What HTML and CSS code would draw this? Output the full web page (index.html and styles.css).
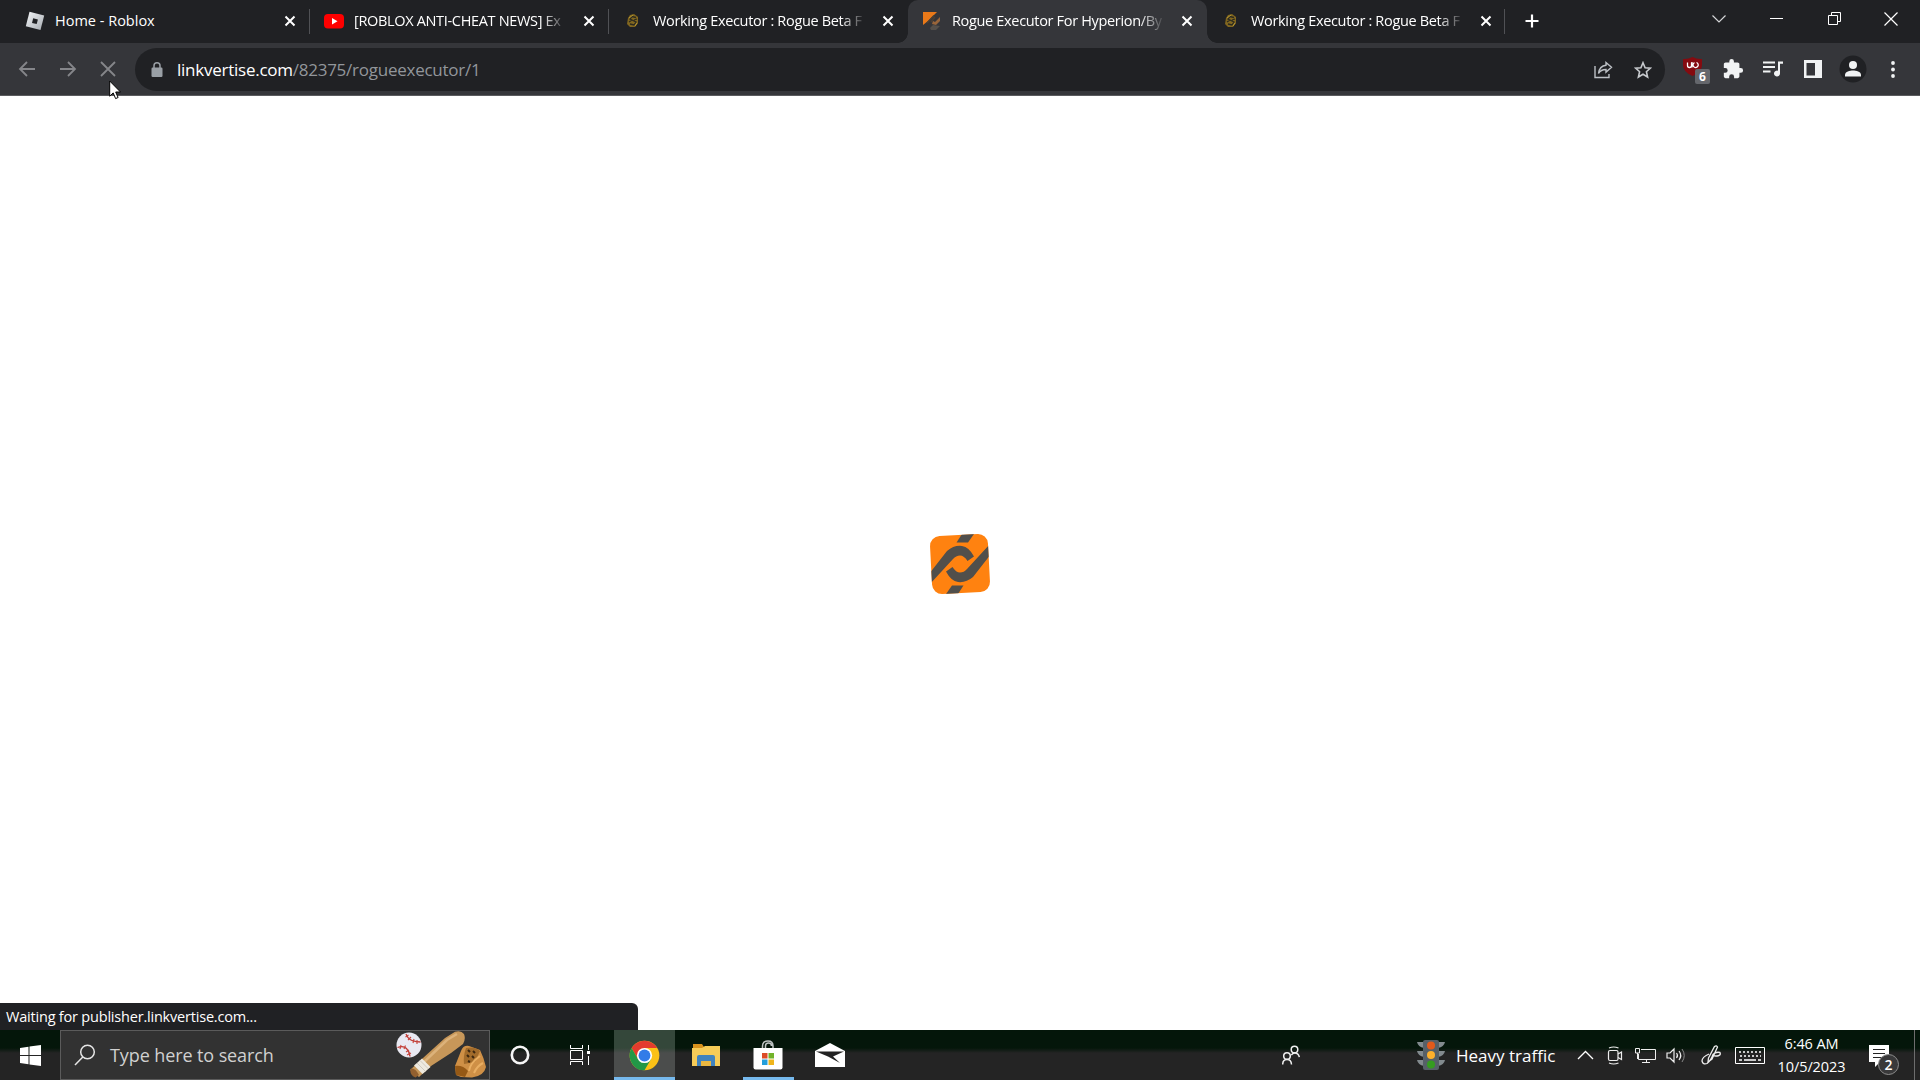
FILE: index.html
```html
<!DOCTYPE html>
<html lang="en">
<head>
<meta charset="utf-8">
<title>Rogue Executor For Hyperion/Byfron</title>
<link rel="stylesheet" href="styles.css">
</head>
<body>
<svg class="defs" aria-hidden="true">
  <symbol id="x" viewBox="0 0 12 12"><path d="M1.5 1.5l9 9M10.5 1.5l-9 9" stroke="currentColor" stroke-width="2"/></symbol>
  <symbol id="coin" viewBox="0 0 14 16"><path d="M4 2L8 1L12 4L12 10L9 14L4 14L1 11L2 5Z" fill="#82671f"/><path d="M10 4.5L6 3.5L4 6L10 9L8 12L4 11M3 9l3-2M8 7l3-1" fill="none" stroke="#2b2a20" stroke-width="1.3"/><path d="M3 5l4-3M9 13l2-3" stroke="#b69833" stroke-width="1"/></symbol>
</svg>
<header class="browser">
  <div class="tabstrip">
    <div class="tab first">
      <span class="fav"><svg width="20" height="20" viewBox="0 0 20 20"><defs><linearGradient id="rb" x2="1" y2="1"><stop stop-color="#f4f6f8"/><stop offset="1" stop-color="#a6abb1"/></linearGradient></defs><path d="M4.5 .8L19.2 4.6L15.5 19L.8 15.2Z" fill="url(#rb)"/><path d="M8.2 7.3l4.7 1.2l-1.2 4.6l-4.7-1.2z" fill="#202124"/></svg></span>
      <span class="title home">Home - Roblox</span><svg class="close"><use href="#x"/></svg>
    </div>
    <div class="tab sep">
      <span class="fav"><svg width="20" height="16" viewBox="0 0 20 16"><rect y="1" width="20" height="14.5" rx="4" fill="#f00"/><path d="M8 5l5.5 3.2L8 11.4z" fill="#fff"/></svg></span>
      <span class="title fade">[ROBLOX ANTI-CHEAT NEWS] Ex</span><svg class="close"><use href="#x"/></svg>
    </div>
    <div class="tab sep">
      <span class="fav"><svg width="14" height="16"><use href="#coin"/></svg></span>
      <span class="title fade">Working Executor : Rogue Beta F</span><svg class="close"><use href="#x"/></svg>
    </div>
    <div class="tab active">
      <span class="fav"><svg width="20" height="20" viewBox="0 0 20 20"><path d="M1 1H15L10 6L6 10L1 14Z" fill="#e97919"/><path d="M5 12L12 4.500M9 11l4-5" stroke="#4d4033" stroke-width="1.500"/><path d="M11 10l2 1 5-5v4l-4 4-4-1z" fill="#99653a"/><path d="M8 17l3-3 7 1-4 4h-5z" fill="#55504b"/></svg></span>
      <span class="title fade">Rogue Executor For Hyperion/By</span><svg class="close"><use href="#x"/></svg>
    </div>
    <div class="tab last">
      <span class="fav"><svg width="14" height="16"><use href="#coin"/></svg></span>
      <span class="title fade">Working Executor : Rogue Beta F</span><svg class="close"><use href="#x"/></svg>
    </div>
    <svg class="plus" width="14" height="14" viewBox="0 0 14 14"><path d="M7 .5v13M.5 7h13" stroke="#fff" stroke-width="2.2"/></svg>
    <div class="winctl">
      <span><svg width="14" height="10" viewBox="0 0 14 10"><path d="M.5 1.5L7 8l6.500-6.500" fill="none" stroke="#d5d6d8" stroke-width="1.2"/></svg></span>
      <span><svg width="13" height="13"><path d="M0 6.500h13" stroke="#fff"/></svg></span>
      <span><svg width="13" height="13"><path d="M.5 3.500h9v9h-9zM3.500 3.500v-3h9v9h-3" fill="none" stroke="#fff"/></svg></span>
      <span><svg width="14" height="14"><path d="M.5 .5l13 13M13.500 .5l-13 13" stroke="#fff" stroke-width="1.200"/></svg></span>
    </div>
  </div>
  <div class="toolbar">
    <div class="nav">
      <span><svg width="18" height="16" viewBox="0 0 18 16"><path d="M17 8H2M9 1L2 8l7 7" fill="none" stroke="#85868a" stroke-width="1.800"/></svg></span>
      <span><svg width="18" height="16" viewBox="0 0 18 16"><path d="M1 8h15M9 1l7 7-7 7" fill="none" stroke="#85868a" stroke-width="1.800"/></svg></span>
      <span><svg width="16" height="16" viewBox="0 0 16 16"><path d="M1 1l14 14M15 1L1 15" stroke="#85868a" stroke-width="1.800"/></svg></span>
    </div>
    <div class="omnibox">
      <svg class="lock" width="12" height="16" viewBox="0 0 12 16"><path d="M3 6V3.800a3 3 0 0 1 6 0V6" fill="none" stroke="#9aa0a6" stroke-width="1.500"/><rect x=".5" y="5.500" width="11" height="9.500" rx="1.200" fill="#9aa0a6"/></svg>
      <span class="url"><b>linkvertise.com</b>/82375/rogueexecutor/1</span>
      <svg class="share" width="19" height="18" viewBox="0 0 19 18"><path d="M1 5v11.500h14V13M12 1.500l5.500 4.800-5.500 4.800V8.500C8.500 8.500 6 9.800 4.500 12.500 5 8.500 7 4.600 12 4.200z" fill="none" stroke="#bdc1c6" stroke-width="1.400"/></svg>
      <svg class="star" width="18" height="18" viewBox="0 0 18 18"><path d="M9 1.700l2.100 5 5.300.5-4 3.500 1.200 5.300L9 13.200 4.400 16l1.200-5.300-4-3.500 5.300-.5z" fill="none" stroke="#c6c9cd" stroke-width="1.600"/></svg>
    </div>
    <div class="ext">
      <span class="ublock"><svg width="28" height="28" viewBox="0 0 28 28"><path d="M0 3Q5 3.500 9.500 1Q14 3.500 19 3V9Q19 16 9.500 20Q0 16 0 9z" fill="#850b10"/><path d="M4.500 6.500v3q0 2 2 2t2-2v-3M9 6v5.500M13.500 6.500a2.600 2.600 0 1 1-2 .1" fill="none" stroke="#fff" stroke-width="1.300"/></svg><em>6</em></span>
      <span><svg width="22" height="22" viewBox="0 0 24 24"><path fill="#f1f3f4" d="M20.500 11H19V7c0-1.100-.9-2-2-2h-4V3.500a2.500 2.500 0 0 0-5 0V5H4c-1.100 0-2 .9-2 2v3.800h1.500a2.700 2.700 0 0 1 0 5.400H2V20c0 1.100.9 2 2 2h3.800v-1.500a2.700 2.700 0 0 1 5.400 0V22H17c1.100 0 2-.9 2-2v-4h1.500a2.500 2.500 0 0 0 0-5z"/></svg></span>
      <span><svg width="20" height="16" viewBox="0 0 20 16"><path d="M0 1.500h12M0 6h12M0 10.500h7.500" stroke="#f1f3f4" stroke-width="1.800"/><path d="M20 .5v2.300h-3v9.700a3 3 0 1 1-2-2.800V.5z" fill="#f1f3f4"/></svg></span>
      <span><svg width="18" height="18"><path fill="#f1f3f4" fill-rule="evenodd" d="M0 0h18v18H0zM2.500 3v12.500H11V3z"/></svg></span>
      <span><svg width="28" height="28" viewBox="0 0 28 28"><circle cx="14" cy="14" r="13.500" fill="#202124"/><circle cx="14" cy="10" r="4" fill="#f1f3f4"/><path d="M6 21.500v-1.800c0-3 5-4.200 8-4.200s8 1.200 8 4.200v1.800z" fill="#f1f3f4"/></svg></span>
      <span><svg width="4" height="17"><g fill="#f1f3f4"><circle cx="2" cy="2" r="1.900"/><circle cx="2" cy="8.500" r="1.900"/><circle cx="2" cy="15" r="1.900"/></g></svg></span>
    </div>
  </div>
  <svg class="cursor" width="13" height="20" viewBox="0 0 13 20"><path d="M.7 1v15.200l3.500-3.300 2.400 5.700 2.500-1.100-2.400-5.500h4.800z" fill="#fff" stroke="#000"/></svg>
</header>
<main class="page">
  <svg class="logo" width="62" height="62" viewBox="0 0 62 62">
    <defs>
      <clipPath id="lg"><rect x="2" y="2" width="58" height="58" rx="10" transform="rotate(-3 31 31)"/></clipPath>
      <g id="half"><path d="M33 1H45L39 9.500H27.500Z"/><path d="M0 41L18 18Q25 12 33 13Q40 14 45 23.500L38.500 28Q35 22.500 31 22.500Q27 22.500 24 26L0 52Z"/></g>
    </defs>
    <g clip-path="url(#lg)">
      <rect width="62" height="62" fill="#ff8210"/>
      <g fill="#514f4b"><use href="#half"/><use href="#half" transform="rotate(180 31 31)"/></g>
    </g>
  </svg>
  <div class="status"><span>Waiting for publisher.linkvertise.com...</span></div>
</main>
<footer class="taskbar">
  <div class="cell start"><svg width="21" height="21" viewBox="0 0 21 21"><path fill="#fff" d="M0 3l8.500-1.200V10H0zM9.500 1.600L21 0v10H9.500zM0 11h8.500v8.200L0 18zM9.500 11H21v10L9.500 19.400z"/></svg></div>
  <div class="search">
    <svg width="22" height="22" viewBox="0 0 22 22"><circle cx="13.500" cy="8" r="6.800" fill="none" stroke="#e6e6e6" stroke-width="1.500"/><path d="M8.800 13L1 21" stroke="#e6e6e6" stroke-width="1.500"/></svg>
    <span>Type here to search</span>
    <svg class="sport" width="92" height="48" viewBox="0 0 92 48">
      <circle cx="14" cy="14" r="12.500" fill="#e9e9f2"/><path d="M11 3q2 5 6 6.500t8.500 1.500M2.500 16.500q6-2 9 1T15 25.500" fill="none" stroke="#bf3b35" stroke-width="1.300"/><path d="M10.500 6l3-2M13 9l3-3M18 12l1-4M22 13l0-4M5 18l1-4M9 18l1.500-3.500M11 21l3-2M12 24l4-2" stroke="#c7443d" stroke-width="1.100"/>
      <path d="M15 39L28 27L50 7L60 .8Q66-1 69 3Q71 8 68 13L56 22L36 35L24 46Z" fill="#c79759"/><path d="M29 31L52 9L62 3" fill="none" stroke="#dcb27a" stroke-width="2.500"/><path d="M27 27.500L35.500 36L27.500 43L19 34.500Z" fill="#eee9df"/><path d="M22 32l8.500 8.500M25 29.500l8.500 8.500" stroke="#c9c2b6" stroke-width=".8"/><path d="M15.500 38q4-2 8.500 6l-3.500 2.500q-6-2-5-8.500" fill="#93602f"/>
      <path d="M61 44L60 35L66 20Q68 14 74 15L85 19Q89 27 91 36Q89 45 77 46.500L66 46z" fill="#cf9046"/><path d="M71 17Q80 15 85 20L80 31L69 33Q68 25 71 17" fill="#a36c2b"/><path d="M73 19l2 2M78 20l2 2M72 24l2 2M77 25l2 2M73 30l2 1" stroke="#3d270f" stroke-width="2"/><path d="M60 35q8-1 13 5l-3 6-9-2z" fill="#965915"/><path d="M74 40q1-8 11-15M79 42q3-7 9-10" fill="none" stroke="#e9ae62" stroke-width="2"/>
    </svg>
  </div>
  <div class="cell cortana"><svg width="20" height="20"><circle cx="10" cy="10" r="8.200" fill="none" stroke="#f5f5f5" stroke-width="2.600"/></svg></div>
  <div class="cell view"><svg width="22" height="20"><path d="M1.500 0v3.500h12V0M1.500 20v-3.500h12V20M1.500 5.500h12v9h-12zM19.500 0v5M19.500 11v9" fill="none" stroke="#fff"/><path d="M18 6h3v3h-3z" fill="#fff"/></svg></div>
  <div class="cell chrome"><svg width="31" height="31" viewBox="0 0 48 48"><circle cx="24" cy="24" r="23" fill="#fbc116"/><path d="M4.080 12.500A23 23 0 0 1 43.900 12.500H24L14 29.800z" fill="#e33b2e"/><path d="M4.080 12.500A23 23 0 0 0 24 47L34 29.800H14z" fill="#229847"/><circle cx="24" cy="24" r="11.800" fill="#fff"/><circle cx="24" cy="24" r="9.200" fill="#327ce8"/></svg></div>
  <div class="cell explorer"><svg width="28" height="24" viewBox="0 0 28 24"><path d="M1 1h9l2 3h15v6H1z" fill="#d9921d"/><path d="M0 5h10l3-2h15v20H0z" fill="#f7cc58"/><path d="M5 23V14q0-2 2-2h14q2 0 2 2v9h-4v-5H9v5z" fill="#4183be"/><path d="M9 18h10v5H9z" fill="#eab740"/></svg></div>
  <div class="cell store"><svg width="30" height="30" viewBox="0 0 30 30"><path d="M9.500 10V6q0-5 5.500-5 5 0 5 5v4M12.500 8V6q0-3 3-3t3 3" fill="none" stroke="#bfc4c4" stroke-width="1.500"/><path d="M.5 8h29v19.500q0 2-2 2h-25q-2 0-2-2z" fill="#fff"/><path d="M9 13h5.500v5.500H9z" fill="#dc4c28"/><path d="M15.500 13H21v5.500h-5.500z" fill="#72b32a"/><path d="M9 19.500h5.500V25H9z" fill="#259fdb"/><path d="M15.500 19.500H21V25h-5.500z" fill="#f0b51c"/></svg></div>
  <div class="cell mail"><svg width="30" height="24" viewBox="0 0 30 24"><path d="M0 8L15 0l15 8v16H0z" fill="#fff"/><path d="M1 8.500h28L18 13.500l7 6.500L13 13.500z" fill="#222"/></svg></div>
  <div class="cell people"><svg width="18" height="20" viewBox="0 0 18 20"><g fill="none" stroke="#eee" stroke-width="1.500"><circle cx="12.500" cy="4.500" r="3.300"/><circle cx="5" cy="11" r="3.300"/><path d="M.7 19.500q0-5 4.300-5t4.500 5M9.300 10.200q1.200-2.300 3.400-2.300 4 0 4.600 4.300"/></g></svg></div>
  <div class="weather"><svg width="28" height="30" viewBox="0 0 28 30"><path d="M0 2h7v6Q1 7 0 2M0 11h7v6q-6-1-7-6M0 20h7v6q-6-1-7-6M28 2h-7v6q6-1 7-6M28 11h-7v6q6-1 7-6M28 20h-7v6q6-1 7-6" fill="#828a8e"/><rect x="6" width="16" height="30" rx="2" fill="#566068"/><circle cx="14" cy="5.500" r="4" fill="#e25a1c"/><circle cx="14" cy="15" r="4" fill="#fdb02c"/><circle cx="14" cy="24.500" r="4" fill="#359c20"/></svg><span>Heavy traffic</span></div>
  <div class="tray">
    <span><svg width="17" height="10"><path d="M1 9l7.500-7.500L16 9" fill="none" stroke="#fff" stroke-width="1.300"/></svg></span>
    <span><svg width="16" height="19" viewBox="0 0 16 19"><g fill="none" stroke="#eee" stroke-width="1.200"><rect x="1.500" y="4.500" width="9.500" height="10" rx="1.500"/><path d="M11 8l3.500-2v7.500L11 11.500M2 2Q6.500 0 11.500 2M2 17Q6.500 19 11.500 17"/></g></svg></span>
    <span><svg width="21" height="17"><path d="M6 2.500h14.500v10H3.500V7M11.500 12.500v3M7 15.500h8M.5 1.500h4v4.500h-4zM2.500 6v6" fill="none" stroke="#eee"/></svg></span>
    <span><svg width="21" height="17" viewBox="0 0 21 17"><path d="M1 6h3l4-4v13l-4-4H1zM10.500 6q2 2.500 0 5M13 4q3.500 4.500 0 9" fill="none" stroke="#eee" stroke-width="1.200"/><path d="M16 2q4.500 6.500 0 13" fill="none" stroke="#888"/></svg></span>
    <span><svg width="21" height="20" viewBox="0 0 21 20"><path d="M7.500 13L13.500 1.500q2-1.500 3 .5L11 14l-4 3zM8 9q-7 3-7 7 1 4 5 2.500 4-3 6-9 3-3 7-2 1 2-1 3-4 1-5 0-2 1-2 4" fill="none" stroke="#eee" stroke-width="1.300"/></svg></span>
    <span><svg width="30" height="17"><path d="M.5 .5h29v16H.5z" fill="none" stroke="#fff"/><path d="M4 5h22M5 9h21" stroke="#fff" stroke-width="1.500" stroke-dasharray="2 2"/><path d="M4 13h3M9 13h12M23 13h3" stroke="#fff" stroke-width="1.300"/></svg></span>
  </div>
  <div class="clock"><span>6:46 AM</span><span class="date">10/5/2023</span></div>
  <div class="notes"><svg width="20" height="23"><path d="M0 0h20v17h-9l-5 5v-5H0z" fill="#fff"/><path d="M4 4.500h12M4 8.500h12M4 12.500h9" stroke="#242424" stroke-width="1.200"/></svg><em>2</em></div>
  <div class="desk"></div>
</footer>
</body>
</html>
```
FILE: styles.css
```css
* { box-sizing: border-box; }
body { margin: 0; width: 1920px; height: 1080px; overflow: hidden; display: flex; flex-direction: column; background: #fff; font-family: "Open Sans", "Noto Sans", sans-serif; color: #fff; }
svg { display: block; flex: none; }
em { font-style: normal; }
.defs { display: none; }
.browser { position: relative; height: 96px; background: #202124; }
.tabstrip { height: 43px; display: flex; align-items: stretch; }
.tab { width: 299px; display: flex; align-items: center; padding: 0 14px 1px 12px; position: relative; }
.first { width: 310px; padding-left: 23px; }
.fav { width: 24px; display: flex; justify-content: center; }
.title { width: 213px; margin-left: 8px; margin-right: 16px; white-space: nowrap; font-size: 14.5px; line-height: 24px; letter-spacing: -0.33px; flex: none; }
.home { letter-spacing: 0; }
.fade { -webkit-mask-image: linear-gradient(90deg, #000 88%, transparent); mask-image: linear-gradient(90deg, #000 88%, transparent); }
.close { width: 12px; height: 12px; }
.sep::before, .last::after { content: ""; position: absolute; left: -1px; top: 9px; width: 1px; height: 25px; background: #505155; }
.last::after { left: auto; right: 1px; }
.active { background: #35363a; border-radius: 10px 10px 0 0; }
.active::before, .active::after { content: ""; position: absolute; bottom: 0; width: 10px; height: 10px; }
.active::before { left: -10px; background: radial-gradient(circle at 0 0, transparent 9.500px, #35363a 10px); }
.active::after { right: -10px; background: radial-gradient(circle at 100% 0, transparent 9.500px, #35363a 10px); }
.plus { margin: 14px 0 0 19px; }
.winctl { margin-left: auto; display: flex; height: 37px; }
.winctl span { width: 57.300px; display: flex; align-items: center; justify-content: center; }
.toolbar { height: 53px; display: flex; align-items: center; background: #35363a; border-bottom: 1px solid #5a5b5e; }
.nav { display: flex; width: 135px; padding-left: 7px; }
.nav span { width: 40.500px; display: flex; justify-content: center; }
.omnibox { width: 1530px; height: 43px; border-radius: 22px; background: #202124; display: flex; align-items: center; padding: 1px 13px 0 16px; }
.lock { margin-right: 14px; }
.url { flex: 1; color: #92969b; font-size: 17px; letter-spacing: -0.25px; line-height: 24px; }
.url b { font-weight: 400; color: #fff; }
.share { margin-right: 21px; }
.ext { display: flex; align-items: center; padding-left: 8px; }
.ext span { width: 40px; display: flex; justify-content: center; }
.ext .ublock { position: relative; height: 28px; justify-content: flex-start; padding: 1px 0 0 10px; }
.ublock em { position: absolute; left: 22px; top: 14px; width: 15px; height: 15px; border-radius: 2px; background: #65676c; font: bold 12px/15px "Open Sans", sans-serif; text-align: center; }
.cursor { position: absolute; left: 109px; top: 80px; }
.page { position: relative; height: 934px; display: flex; align-items: center; justify-content: center; }
.logo { margin-top: 2px; }
.status { position: absolute; left: 0; bottom: 0; width: 638px; height: 27px; border-radius: 0 6px 0 0; background: #202124; padding-left: 6px; font-size: 14.500px; line-height: 27px; letter-spacing: -0.2px; }
.taskbar { height: 50px; display: flex; background: linear-gradient(#04160a 0 18px, #242424 23px); }
.cell { width: 61.500px; display: flex; align-items: center; justify-content: center; }
.start { width: 60px; }
.search { width: 430px; display: flex; align-items: center; background: #323232; border: 1px solid #5b5b5b; padding-left: 13px; color: #d0d0d0; font-size: 18px; letter-spacing: -0.1px; }
.search span { margin-left: 14px; flex: 1; }
.sport { margin-right: 2px; }
.cortana { width: 60px; }
.view { width: 64px; padding-right: 4px; }
.chrome { width: 61px; background: linear-gradient(#34473a 0 18px, #4b4d4c 23px); border-bottom: 3px solid #76b9ed; padding: 3px 1px 0 0; }
.explorer { width: 62px; }
.store { width: 62px; background: linear-gradient(#76b9ed, #76b9ed) center bottom / 51px 3px no-repeat; }
.mail { width: 62px; }
.people { margin-left: 399px; }
.weather { display: flex; align-items: center; width: 153px; margin-left: 95.500px; font-size: 17px; white-space: nowrap; }
.weather span { margin-left: 11px; padding-top: 1px; }
.tray { display: flex; width: 200px; }
.tray span { display: flex; align-items: center; justify-content: center; width: 30px; }
.tray span:nth-child(4) { width: 32px; }
.tray span:nth-child(5) { width: 38px; }
.tray span:nth-child(6) { width: 40px; }
.clock { width: 83px; display: flex; flex-direction: column; align-items: center; font-size: 14.500px; line-height: 23px; padding-top: 2px; letter-spacing: -0.1px; }
.notes { position: relative; width: 61px; padding: 15px 0 0 16px; }
.notes em { position: absolute; left: 25px; top: 24px; width: 21px; height: 21px; border-radius: 50%; border: 1px solid #8d8d8d; background: #39393a; font: 600 14px/19px "Open Sans", sans-serif; text-align: center; }
.desk { flex: 1; border-left: 1px solid #6d6d6d; }
```
